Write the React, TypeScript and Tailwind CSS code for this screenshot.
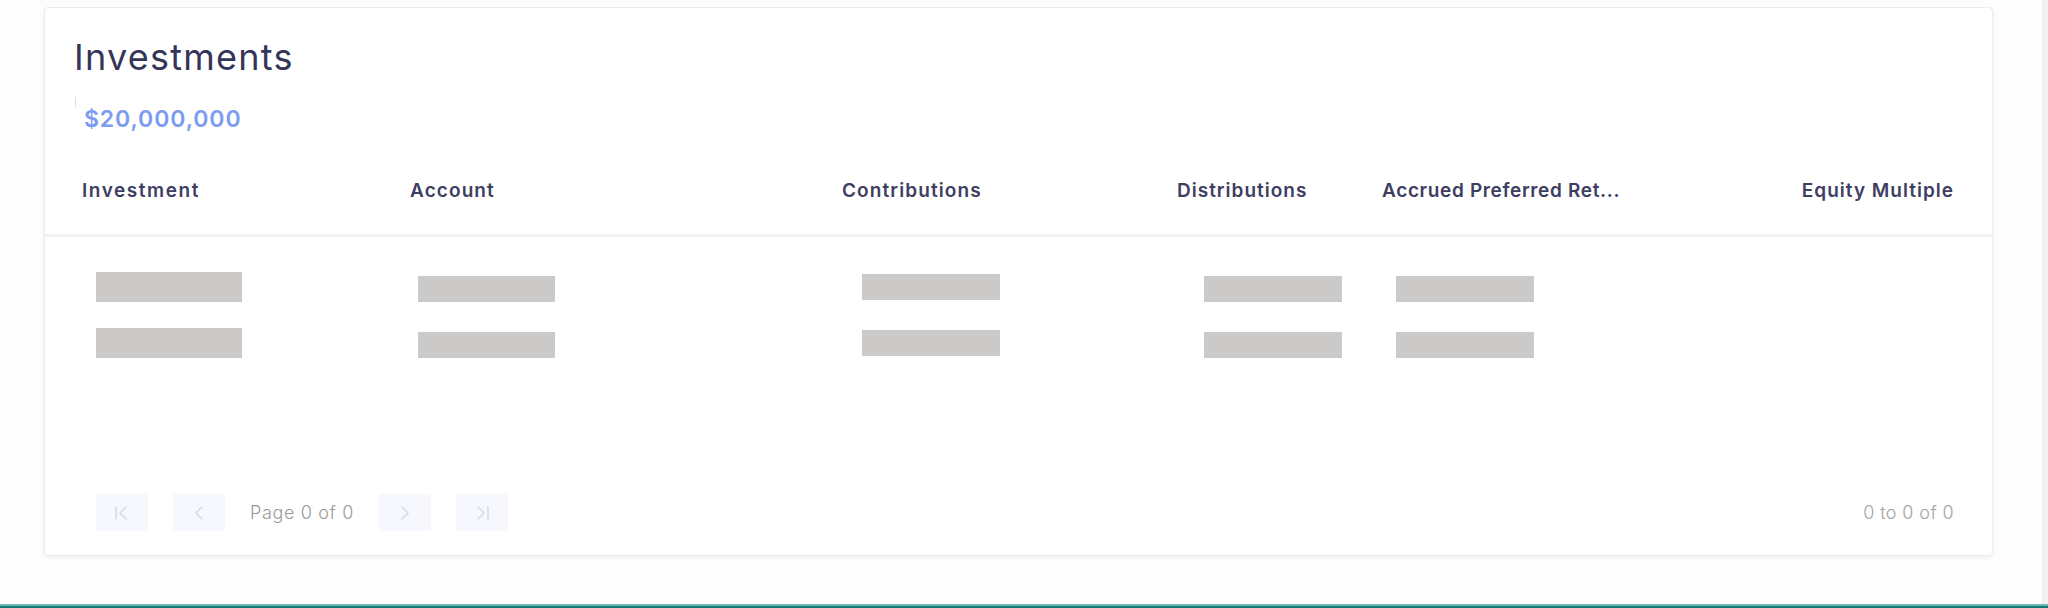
import React from "react";

const cols = [
  { w: "w-[328px]", label: "Investment", tr: "tracking-[1.55px]" },
  { w: "w-[432px]", label: "Account", tr: "tracking-[1.1px]" },
  { w: "w-[335px]", label: "Contributions", tr: "tracking-[1.1px]" },
  { w: "w-[205px]", label: "Distributions", tr: "tracking-[1px]" },
  { w: "w-[260px]", label: "Accrued Preferred Ret...", tr: "tracking-[0.65px]" },
];

function Bar({ className }: { className: string }) {
  return <div className={`bg-[#cbcac8] ${className}`} />;
}

function FirstIcon() {
  return (
    <svg width="18" height="16" viewBox="0 0 18 16" fill="none" stroke="#d5d9ef" strokeWidth="1.6" strokeLinecap="round" strokeLinejoin="round">
      <path d="M3 2v12" />
      <path d="M13 2L7 8l6 6" />
    </svg>
  );
}
function PrevIcon() {
  return (
    <svg width="16" height="16" viewBox="0 0 16 16" fill="none" stroke="#d5d9ef" strokeWidth="1.6" strokeLinecap="round" strokeLinejoin="round">
      <path d="M11 2L5 8l6 6" />
    </svg>
  );
}
function NextIcon() {
  return (
    <svg width="16" height="16" viewBox="0 0 16 16" fill="none" stroke="#d5d9ef" strokeWidth="1.6" strokeLinecap="round" strokeLinejoin="round">
      <path d="M5 2l6 6-6 6" />
    </svg>
  );
}
function LastIcon() {
  return (
    <svg width="18" height="16" viewBox="0 0 18 16" fill="none" stroke="#d5d9ef" strokeWidth="1.6" strokeLinecap="round" strokeLinejoin="round">
      <path d="M5 2l6 6-6 6" />
      <path d="M15 2v12" />
    </svg>
  );
}

function PageBtn({ children }: { children: React.ReactNode }) {
  return (
    <div className="w-[52px] h-[37px] bg-[#f7f8fd] rounded-[2px] flex items-center justify-center">
      {children}
    </div>
  );
}

export default function App() {
  const rows = [0, 1];
  return (
    <div className="w-[2048px] h-[608px] flex flex-col bg-[#fdfdfd] font-['Inter',sans-serif] overflow-hidden">
      <div className="flex-1 flex">
        <div className="flex-1 pl-[44px] pr-[49px] pt-[7px]">
          <div className="h-[549px] bg-white border border-[#ebebf1] rounded-[4px] shadow-[0_2px_4px_rgba(0,0,0,0.05)] flex flex-col">
            <div className="pt-[27px] pl-[29px]">
              <h1 className="text-[36px] leading-[44px] font-normal text-[#35355a] tracking-[1.25px]">
                Investments
              </h1>
            </div>
            <div className="mt-[18px] pl-[30px] flex items-start">
              <div className="w-px h-[10px] bg-[#dcdce4]" />
              <div className="ml-[8px] mt-[8px] text-[23px] leading-[28px] font-semibold text-[#7b9cf0] tracking-[0.9px]">
                $20,000,000
              </div>
            </div>
            <div className="mt-[46px] pl-[37px] pr-[38px] pb-[31px] flex text-[19px] leading-[24px] font-semibold text-[#3e3e62]">
              {cols.map((c) => (
                <div key={c.label} className={`${c.w} ${c.tr} whitespace-nowrap`}>
                  {c.label}
                </div>
              ))}
              <div className="flex-1 text-right whitespace-nowrap tracking-[1px]">Equity Multiple</div>
            </div>
            <div className="h-[3px] bg-[#f1f1f4]" />
            <div className="pt-[25px] pl-[37px] pr-[38px]">
              {rows.map((r) => (
                <div key={r} className="h-[56px] flex items-start">
                  <div className="w-[328px]">
                    <Bar className="ml-[14px] mt-[10px] w-[146px] h-[30px]" />
                  </div>
                  <div className="w-[432px]">
                    <Bar className="ml-[8px] mt-[14px] w-[137px] h-[26px]" />
                  </div>
                  <div className="w-[335px]">
                    <Bar className="ml-[20px] mt-[12px] w-[138px] h-[26px]" />
                  </div>
                  <div className="w-[205px]">
                    <Bar className="ml-[27px] mt-[14px] w-[138px] h-[26px]" />
                  </div>
                  <div className="w-[260px]">
                    <Bar className="ml-[14px] mt-[14px] w-[138px] h-[26px]" />
                  </div>
                  <div className="flex-1" />
                </div>
              ))}
            </div>
            <div className="flex-1" />
            <div className="pl-[51px] pr-[38px] pb-[24px] flex items-center justify-between">
              <div className="flex items-center gap-[25px]">
                <PageBtn>
                  <FirstIcon />
                </PageBtn>
                <PageBtn>
                  <PrevIcon />
                </PageBtn>
                <span className="text-[18px] leading-[24px] font-light text-[#9a9a9a] tracking-[0.65px]">
                  Page 0 of 0
                </span>
                <PageBtn>
                  <NextIcon />
                </PageBtn>
                <PageBtn>
                  <LastIcon />
                </PageBtn>
              </div>
              <span className="text-[18px] leading-[24px] font-light text-[#a3a3a3] tracking-[0.4px]">
                0 to 0 of 0
              </span>
            </div>
          </div>
        </div>
        <div className="w-[6px] bg-[#f1f1f1] border-l border-[#ececec]" />
      </div>
      <div className="h-[4px] border-t-2 border-[#6db7b3] bg-[#147a74]" />
    </div>
  );
}
